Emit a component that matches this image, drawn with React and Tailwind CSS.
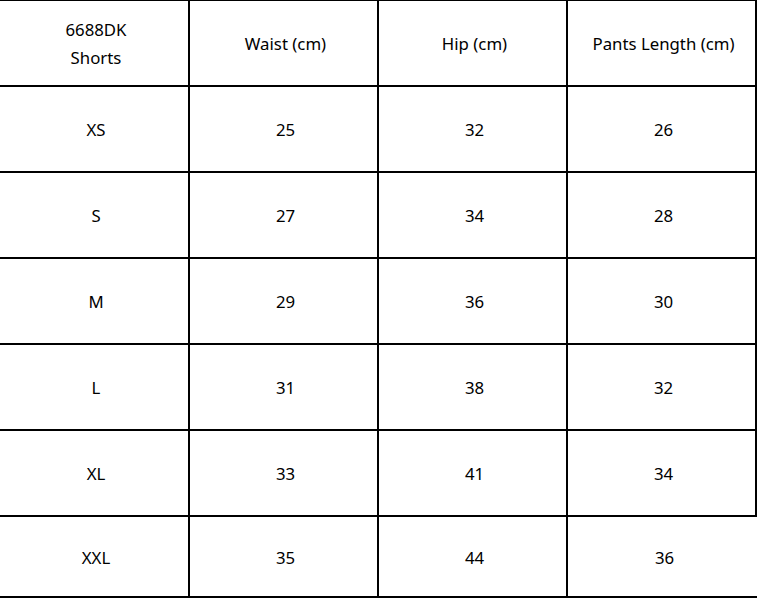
import React from "react";

const rows = [
  ["XS", "25", "32", "26"],
  ["S", "27", "34", "28"],
  ["M", "29", "36", "30"],
  ["L", "31", "38", "32"],
  ["XL", "33", "41", "34"],
];

function Cell({ first, children }) {
  return (
    <div
      className={`flex items-center justify-center text-center pl-[4px] pt-[2px] border-r-2 border-black ${
        first ? "w-[192px] border-l-2" : "w-[189px]"
      }`}
    >
      {children}
    </div>
  );
}

export default function App() {
  return (
    <div className="w-[757px] h-[598px] overflow-hidden bg-white">
      <div
        className="-ml-[2px] -mt-[1px] w-[800px] text-[16.8px] text-black leading-[28px]"
        style={{ fontFamily: '"Noto Sans", "Open Sans", sans-serif' }}
      >
        <div className="flex w-[759px] h-[88px] border-t-2 border-b-2 border-black">
          <Cell first>
            <span>
              6688DK
              <br />
              Shorts
            </span>
          </Cell>
          <Cell>Waist (cm)</Cell>
          <Cell>Hip (cm)</Cell>
          <Cell>Pants Length (cm)</Cell>
        </div>
        {rows.map((r) => (
          <div key={r[0]} className="flex w-[759px] h-[86px] border-b-2 border-black">
            <Cell first>{r[0]}</Cell>
            <Cell>{r[1]}</Cell>
            <Cell>{r[2]}</Cell>
            <Cell>{r[3]}</Cell>
          </div>
        ))}
        <div className="flex h-[81px] border-b-2 border-black">
          <Cell first>XXL</Cell>
          <Cell>35</Cell>
          <Cell>44</Cell>
          <div className="w-[189px] flex items-center justify-center pl-[4px] pt-[2px]">36</div>
        </div>
      </div>
    </div>
  );
}
